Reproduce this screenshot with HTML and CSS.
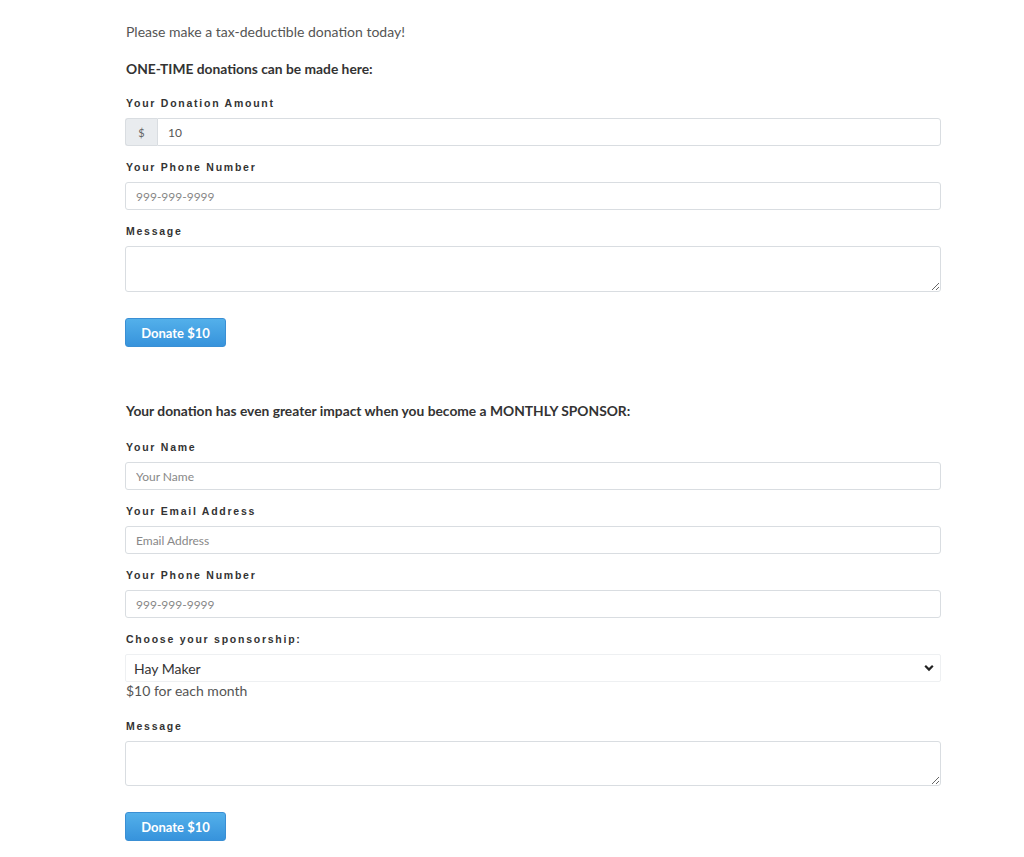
FILE: index.html
```html
<!DOCTYPE html>
<html>
<head>
<meta charset="utf-8">
<link rel="stylesheet" href="styles.css">
</head>
<body>
<div class="wrap">
  <p class="intro">Please make a tax-deductible donation today!</p>
  <p class="lead lead-one">ONE-TIME donations can be made here:</p>
  <form class="form">
    <div class="group">
      <label class="lbl">Your Donation Amount</label>
      <div class="input-group">
        <span class="addon">$</span>
        <input class="ctl ctl-grp" type="text" value="10">
      </div>
    </div>
    <div class="group">
      <label class="lbl">Your Phone Number</label>
      <input class="ctl" type="text" placeholder="999-999-9999">
    </div>
    <div class="group">
      <label class="lbl">Message</label>
      <textarea class="ctl area"></textarea>
    </div>
    <button type="button" class="btn">Donate $10</button>
  </form>

  <p class="lead lead-two">Your donation has even greater impact when you become a MONTHLY SPONSOR:</p>
  <form class="form">
    <div class="group">
      <label class="lbl">Your Name</label>
      <input class="ctl" type="text" placeholder="Your Name">
    </div>
    <div class="group">
      <label class="lbl">Your Email Address</label>
      <input class="ctl" type="text" placeholder="Email Address">
    </div>
    <div class="group">
      <label class="lbl">Your Phone Number</label>
      <input class="ctl" type="text" placeholder="999-999-9999">
    </div>
    <div class="group">
      <label class="lbl">Choose your sponsorship:</label>
      <div class="select">
        <span class="sel-text">Hay Maker</span>
        <svg class="chev" width="10" height="8" viewBox="0 0 10 8"><path d="M1.2 1.8 L5 5.6 L8.8 1.8" fill="none" stroke="#222" stroke-width="2.2"/></svg>
      </div>
      <div class="help">$10 for each month</div>
    </div>
    <div class="group">
      <label class="lbl">Message</label>
      <textarea class="ctl area area-2"></textarea>
    </div>
    <button type="button" class="btn">Donate $10</button>
  </form>
</div>
</body>
</html>
```

FILE: styles.css
```css
html, body {
  margin: 0;
  padding: 0;
  background: #fff;
}
body {
  font-family: "Lato", "Open Sans", sans-serif;
  color: #555;
}
.wrap {
  margin-left: 125px;
  width: 816px;
  padding-top: 23px;
}
.intro {
  margin: 0;
  font-size: 14px;
  line-height: 18px;
  color: #555;
  padding-left: 1px;
}
.lead {
  margin: 0;
  font-size: 13.8px;
  line-height: 18px;
  font-weight: bold;
  color: #333;
  padding-left: 1px;
}
.lead-one {
  margin-top: 19px;
  margin-bottom: 19px;
}
.lead-two {
  margin-top: 55px;
  margin-bottom: 21px;
}
.form {
  margin: 0;
}
.group {
  margin-bottom: 15px;
}
.lbl {
  display: block;
  font-family: "Liberation Sans", Arial, sans-serif;
  font-size: 10.5px;
  font-weight: bold;
  letter-spacing: 1.75px;
  line-height: 13px;
  color: #333;
  margin-bottom: 8px;
  padding-left: 1px;
}
.ctl {
  display: block;
  box-sizing: border-box;
  width: 100%;
  height: 28px;
  margin: 0;
  border: 1px solid #d9dde1;
  border-radius: 3px;
  padding: 0 10px;
  font-family: "Lato", "Open Sans", sans-serif;
  font-size: 12px;
  color: #555;
  background: #fff;
  outline: none;
}
.ctl::placeholder {
  color: #888;
}
.area {
  height: 46px;
  resize: vertical;
  padding-top: 4px;
}
.area-2 {
  height: 45px;
}
.input-group {
  display: flex;
}
.addon {
  flex: 0 0 auto;
  box-sizing: border-box;
  width: 32px;
  height: 28px;
  display: flex;
  align-items: center;
  justify-content: center;
  background: #e9ecef;
  border: 1px solid #d9dde1;
  border-right: none;
  border-radius: 3px 0 0 3px;
  font-size: 11px;
  color: #666;
}
.ctl-grp {
  flex: 1 1 auto;
  border-radius: 0 3px 3px 0;
}
.btn {
  display: block;
  box-sizing: border-box;
  width: 101px;
  height: 29px;
  margin: 26px 0 0 0;
  padding: 0;
  border: 1px solid #3a8fd4;
  border-radius: 3px;
  background: linear-gradient(#53b0ea, #3793dc);
  color: #fff;
  font-family: "Lato", "Open Sans", sans-serif;
  font-weight: bold;
  font-size: 13px;
}
.select {
  box-sizing: border-box;
  height: 28px;
  border: 1px solid #eef0f2;
  border-radius: 2px;
  display: flex;
  align-items: center;
  justify-content: space-between;
  padding: 0 6px 0 8px;
  font-size: 14px;
  color: #333;
}
.help {
  font-size: 14px;
  line-height: 16px;
  color: #555;
  padding-left: 1px;
  margin-top: 1px;
  margin-bottom: 21px;
}
```
